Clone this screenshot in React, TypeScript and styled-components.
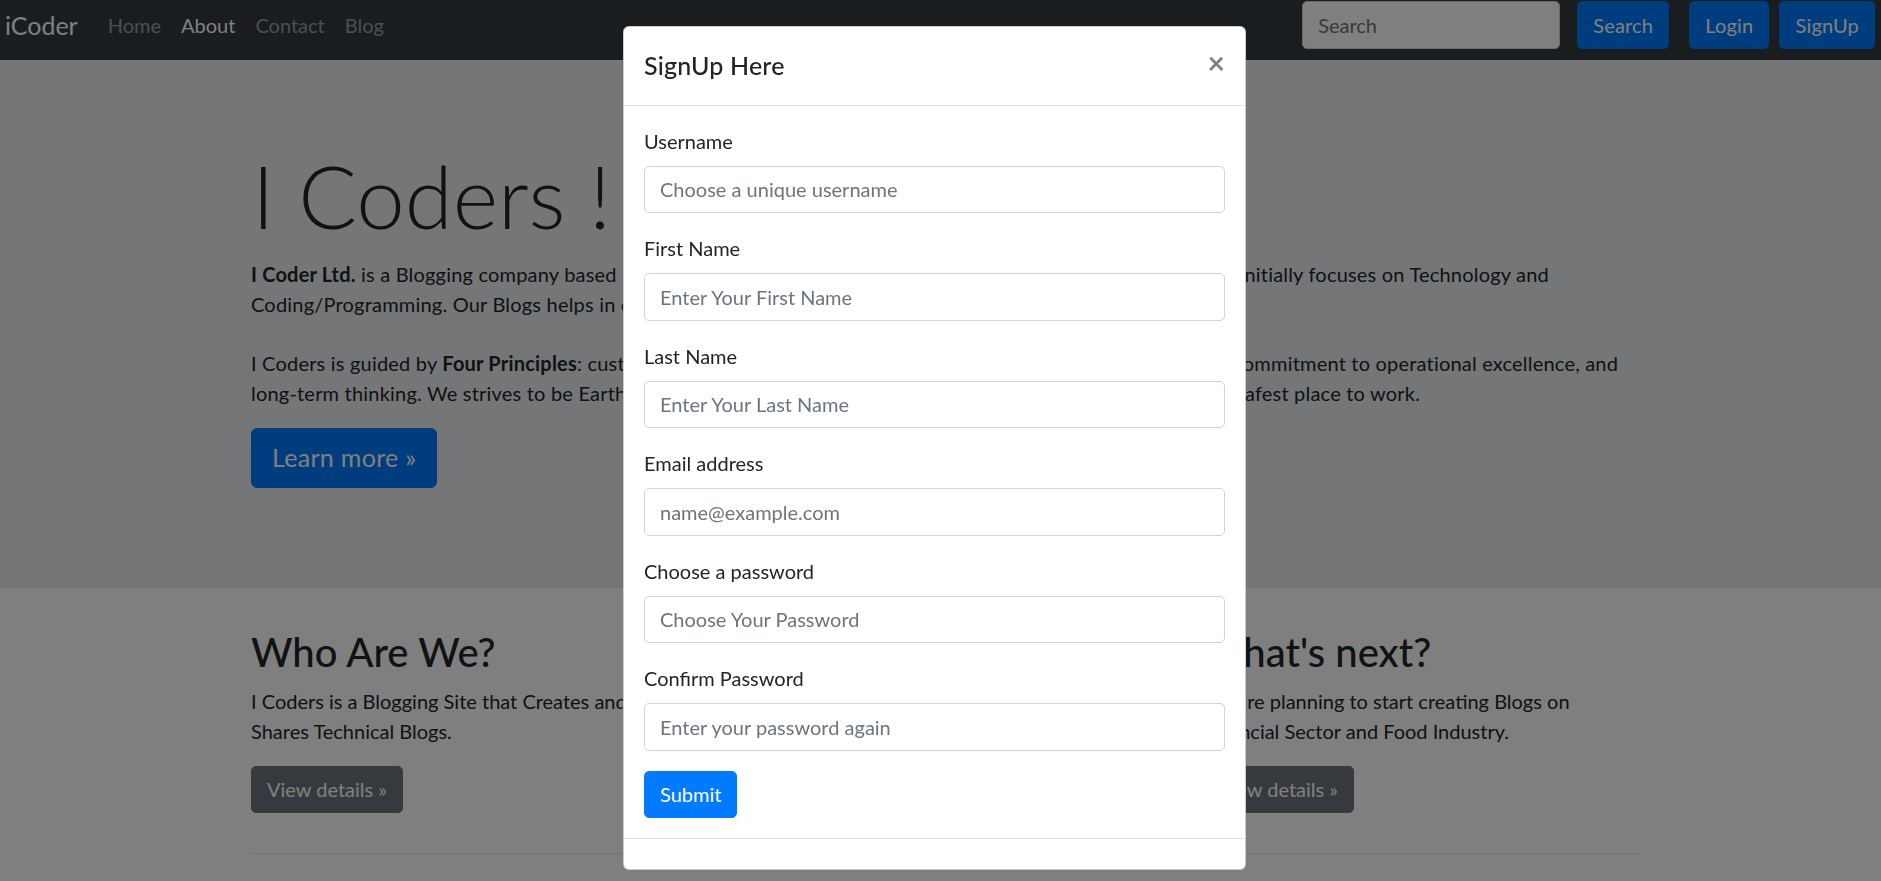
import React from "react";
import styled, { createGlobalStyle } from "styled-components";

const FONT = `"Lato", "Noto Sans", "Liberation Sans", sans-serif`;

const GlobalStyle = createGlobalStyle`
  html, body {
    margin: 0;
    padding: 0;
    background: #ffffff;
    overflow: hidden;
  }
  body {
    font-family: ${FONT};
    font-size: 20px;
    line-height: 30px;
    color: #212529;
  }
  *, *::before, *::after { box-sizing: border-box; }
`;

const Page = styled.div`
  width: 1881px;
  height: 881px;
  overflow: hidden;
`;

/* ---------- Navbar ---------- */
const Navbar = styled.nav`
  display: flex;
  align-items: center;
  height: 60px;
  padding: 1px 6px 11px 5px;
  background: #343a40;
`;

const Brand = styled.a`
  font-size: 25px;
  line-height: 37px;
  color: #ffffff;
  margin-right: 20px;
  text-decoration: none;
`;

const NavList = styled.ul`
  display: flex;
  list-style: none;
  margin: 0;
  padding: 0;
`;

const NavLink = styled.a<{ $active?: boolean }>`
  display: block;
  padding: 0 10px;
  font-size: 20px;
  line-height: 30px;
  text-decoration: none;
  color: ${(p) => (p.$active ? "#ffffff" : "rgba(255,255,255,0.5)")};
`;

const NavRight = styled.div`
  display: flex;
  align-items: center;
  margin-left: auto;
`;

const SearchInput = styled.input`
  width: 258px;
  height: 48px;
  padding: 7px 15px;
  font-family: ${FONT};
  font-size: 20px;
  line-height: 30px;
  color: #495057;
  background: #ffffff;
  border: 1px solid #ced4da;
  border-radius: 5px;
  margin-right: 17px;
  &::placeholder { color: #6c757d; }
`;

const Btn = styled.button<{ $ml?: number }>`
  display: inline-block;
  height: 48px;
  padding: 0 15px;
  margin-left: ${(p) => p.$ml ?? 0}px;
  font-family: ${FONT};
  font-size: 20px;
  line-height: 30px;
  letter-spacing: 0.2px;
  color: #ffffff;
  background: #007bff;
  border: 1px solid #007bff;
  border-radius: 5px;
  cursor: pointer;
`;

/* ---------- Jumbotron ---------- */
const Jumbotron = styled.section`
  background: #e9ecef;
  padding: 82px 0 80px;
  margin-bottom: 40px;
`;

const Container = styled.div`
  width: 1389px;
  margin-left: 251px;
`;

const Display = styled.h1`
  font-size: 87px;
  font-weight: 300;
  line-height: 108px;
  margin: 0 0 9px;
  padding-left: 1px;
`;

const Para = styled.p<{ $mb?: number }>`
  font-size: 20px;
  line-height: 30px;
  margin: 0 0 ${(p) => p.$mb ?? 20}px;
`;

const LeadText = styled(Para)`
  letter-spacing: 0.2px;
`;

const NoWrap = styled.span`
  white-space: nowrap;
`;

const BigButton = styled.a`
  display: inline-block;
  padding: 10px 20px;
  font-size: 25px;
  line-height: 37.5px;
  letter-spacing: 0.3px;
  color: #ffffff;
  background: #007bff;
  border: 1px solid #007bff;
  border-radius: 6px;
  text-decoration: none;
`;

/* ---------- Columns ---------- */
const Row = styled.div`
  display: grid;
  grid-template-columns: repeat(3, 1fr);
  column-gap: 37.5px;
`;

const ColTitle = styled.h2`
  font-size: 40px;
  font-weight: 500;
  line-height: 48px;
  margin: 0 0 10px;
`;

const DetailsButton = styled.a`
  display: inline-block;
  padding: 7.5px 15px;
  font-size: 20px;
  line-height: 30px;
  color: #ffffff;
  background: #6c757d;
  border: 1px solid #6c757d;
  border-radius: 5px;
  text-decoration: none;
`;

const Rule = styled.hr`
  margin: 20px 0;
  border: 0;
  border-top: 1px solid rgba(0, 0, 0, 0.1);
`;

/* ---------- Modal ---------- */
const Backdrop = styled.div`
  position: fixed;
  inset: 0;
  background: rgba(0, 0, 0, 0.5);
  z-index: 1040;
`;

const Modal = styled.div`
  position: fixed;
  top: 26px;
  left: 623px;
  width: 623px;
  background: #ffffff;
  border: 1px solid rgba(0, 0, 0, 0.2);
  border-radius: 6px;
  z-index: 1050;
  display: flex;
  flex-direction: column;
`;

const ModalHeader = styled.div`
  display: flex;
  align-items: flex-start;
  padding: 20px;
  border-bottom: 1px solid #dee2e6;
`;

const ModalTitle = styled.h5`
  margin: 0;
  font-size: 25px;
  font-weight: 500;
  line-height: 37.5px;
  letter-spacing: 0.2px;
`;

const CloseButton = styled.button`
  margin: -20px -20px -20px auto;
  padding: 20px;
  background: transparent;
  border: 0;
  font-family: ${FONT};
  font-size: 30px;
  font-weight: 700;
  line-height: 30px;
  color: #000000;
  opacity: 0.5;
  cursor: pointer;
`;

const ModalBody = styled.form`
  padding: 20px;
`;

const FormGroup = styled.div`
  margin-bottom: 20px;
`;

const Label = styled.label`
  display: inline-block;
  margin-bottom: 10px;
  font-size: 20px;
  line-height: 30px;
  color: #212529;
`;

const Input = styled.input`
  display: block;
  width: 100%;
  height: 47.5px;
  padding: 7.5px 15px;
  font-family: ${FONT};
  font-size: 20px;
  line-height: 30px;
  color: #495057;
  background: #ffffff;
  border: 1px solid #ced4da;
  border-radius: 5px;
  &::placeholder { color: #6c757d; }
`;

const SubmitButton = styled.button`
  display: inline-block;
  height: 47.5px;
  padding: 0 15px;
  font-family: ${FONT};
  font-size: 20px;
  line-height: 30px;
  color: #ffffff;
  background: #007bff;
  border: 1px solid #007bff;
  border-radius: 5px;
  cursor: pointer;
`;

const ModalFooter = styled.div`
  height: 31px;
  border-top: 1px solid #dee2e6;
`;

const fields = [
  { id: "username", label: "Username", placeholder: "Choose a unique username", type: "text" },
  { id: "fname", label: "First Name", placeholder: "Enter Your First Name", type: "text" },
  { id: "lname", label: "Last Name", placeholder: "Enter Your Last Name", type: "text" },
  { id: "email", label: "Email address", placeholder: "name@example.com", type: "email" },
  { id: "pass1", label: "Choose a password", placeholder: "Choose Your Password", type: "password" },
  { id: "pass2", label: "Confirm Password", placeholder: "Enter your password again", type: "password" },
];

const columns = [
  {
    title: "Who Are We?",
    text: "I Coders is a Blogging Site that Creates and Shares Technical Blogs.",
  },
  {
    title: "Our Vision",
    text: "We aim to make learning to code simple and fun for everyone.",
  },
  {
    title: "What's next?",
    text: "We are planning to start creating Blogs on Financial Sector and Food Industry.",
  },
];

export default function App() {
  return (
    <Page>
      <GlobalStyle />
      <Navbar>
        <Brand href="#">iCoder</Brand>
        <NavList>
          <li><NavLink href="#">Home</NavLink></li>
          <li><NavLink href="#" $active>About</NavLink></li>
          <li><NavLink href="#">Contact</NavLink></li>
          <li><NavLink href="#">Blog</NavLink></li>
        </NavList>
        <NavRight>
          <SearchInput type="search" placeholder="Search" aria-label="Search" />
          <Btn>Search</Btn>
          <Btn $ml={20}>Login</Btn>
          <Btn $ml={10}>SignUp</Btn>
        </NavRight>
      </Navbar>

      <Jumbotron>
        <Container>
          <Display>I Coders !</Display>
          <LeadText $mb={29}>
            <b>I Coder Ltd.</b> is a Blogging company based in India. It was founded in 2021 by a
            group of keen developers and it initially focuses on Technology and
            Coding/Programming. Our Blogs helps in enhancing the coding skills of the readers.
          </LeadText>
          <LeadText>
            I Coders is guided by <b>Four Principles</b>: customer obsession rather than competitor
            focus, passion for invention, commitment to operational excellence, and{" "}
            <NoWrap>long-term</NoWrap> thinking. We strives to be Earth’s most customer-centric
            venture, Earth’s best employer, and Earth’s safest place to work.
          </LeadText>
          <Para>
            <BigButton href="#">Learn more »</BigButton>
          </Para>
        </Container>
      </Jumbotron>

      <Container>
        <Row>
          {columns.map((c) => (
            <div key={c.title}>
              <ColTitle>{c.title}</ColTitle>
              <Para>{c.text}</Para>
              <Para>
                <DetailsButton href="#">View details »</DetailsButton>
              </Para>
            </div>
          ))}
        </Row>
        <Rule />
      </Container>

      <Backdrop />
      <Modal role="dialog">
        <ModalHeader>
          <ModalTitle>SignUp Here</ModalTitle>
          <CloseButton type="button" aria-label="Close">×</CloseButton>
        </ModalHeader>
        <ModalBody onSubmit={(e) => e.preventDefault()}>
          {fields.map((f) => (
            <FormGroup key={f.id}>
              <Label htmlFor={f.id}>{f.label}</Label>
              <Input id={f.id} type={f.type} placeholder={f.placeholder} />
            </FormGroup>
          ))}
          <SubmitButton type="submit">Submit</SubmitButton>
        </ModalBody>
        <ModalFooter />
      </Modal>
    </Page>
  );
}
